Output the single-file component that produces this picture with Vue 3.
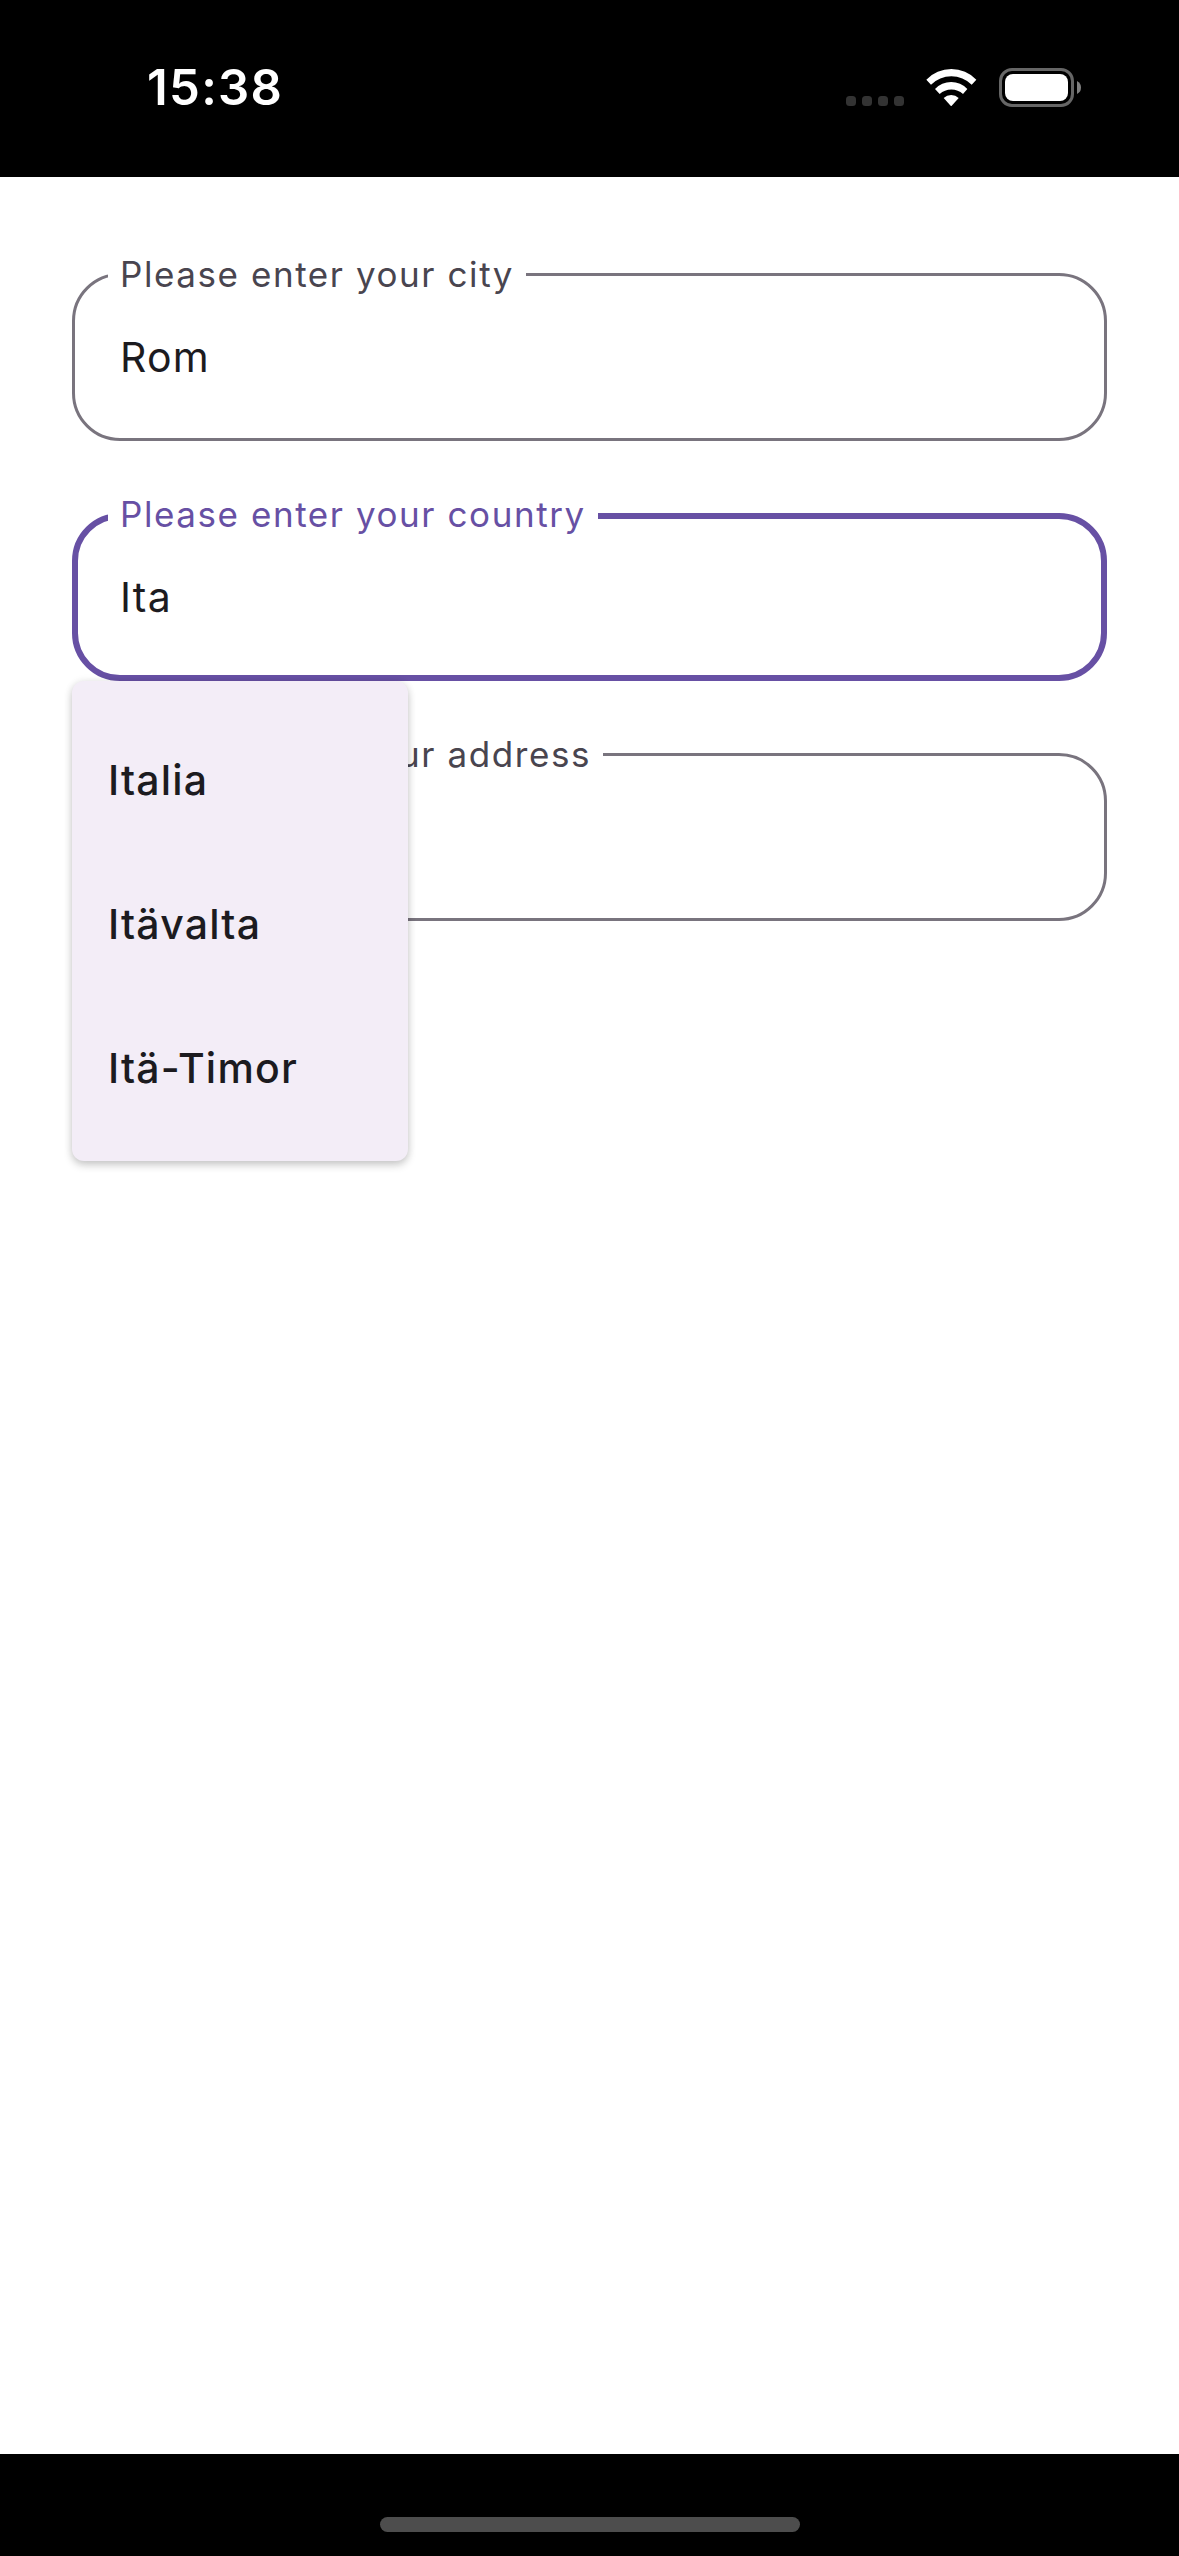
<script setup>
const fields = [
  { id: 'city', label: 'Please enter your city', value: 'Rom' },
  {
    id: 'country',
    label: 'Please enter your country',
    value: 'Ita',
    focused: true,
    options: ['Italia', 'Itävalta', 'Itä-Timor'],
  },
  { id: 'address', label: 'Please enter your address', value: '' },
]
</script>

<template>
  <div class="screen">
    <header class="status-bar">
      <span class="time">15:38</span>
      <div class="indicators">
        <div class="signal"><i v-for="n in 4" :key="n" class="dot"></i></div>
        <svg class="wifi" viewBox="319 86 152 113" aria-hidden="true">
          <path d="M320 118A104 104 0 0 1 470 118L456 133A87 87 0 0 0 334 133Z" />
          <path d="M346 146A66.5 66.5 0 0 1 443 146L430 161A51 51 0 0 0 360 161Z" />
          <path d="M372 173A32 32 0 0 1 417 173L394.500 198Z" />
        </svg>
        <div class="battery">
          <div class="battery-body"><div class="battery-level"></div></div>
          <svg class="battery-tip" viewBox="0 0 4 13" aria-hidden="true">
            <path d="M0 0Q4 2 4 6.500T0 13Z" />
          </svg>
        </div>
      </div>
    </header>

    <main class="form">
      <div v-for="field in fields" :key="field.id" class="field">
        <fieldset class="outline" :class="{ focused: field.focused }">
          <legend class="label">{{ field.label }}</legend>
          <div class="value">{{ field.value }}</div>
        </fieldset>
        <ul v-if="field.options" class="menu">
          <li v-for="option in field.options" :key="option" class="option">{{ option }}</li>
        </ul>
      </div>
    </main>

    <footer class="home-area"><div class="home-indicator"></div></footer>
  </div>
</template>

<style>
body {
  margin: 0;
  background: #fff;
}
</style>

<style scoped>
.screen {
  display: flex;
  flex-direction: column;
  width: 1179px;
  height: 2556px;
  overflow: hidden;
  background: #fff;
  font-family: Inter, 'Liberation Sans', sans-serif;
  color: #1c1b1f;
}

.status-bar {
  display: flex;
  justify-content: space-between;
  box-sizing: border-box;
  height: 177px;
  padding: 58px 98px 0 147px;
  background: #000;
  color: #fff;
}

.time {
  font-size: 49px;
  font-weight: 600;
  line-height: 60px;
  letter-spacing: 1.3px;
}

.indicators {
  display: flex;
  align-items: flex-start;
  padding-top: 10px;
}

.signal {
  display: flex;
  gap: 6px;
  margin: 28px 22.300px 0 0;
}

.dot {
  width: 10px;
  height: 10px;
  border-radius: 3.500px;
  background: #333;
}

.wifi {
  width: 50.700px;
  height: 37.700px;
  margin: 0.700px 22px 0 0;
  fill: #fff;
}

.battery {
  display: flex;
  align-items: center;
  gap: 3px;
}

.battery-body {
  box-sizing: border-box;
  width: 75px;
  height: 39px;
  padding: 3px;
  border: 3px solid #666;
  border-radius: 13px;
}

.battery-level {
  height: 100%;
  border-radius: 8px;
  background: #fff;
}

.battery-tip {
  width: 4px;
  height: 13px;
  fill: #808080;
}

.form {
  display: flex;
  flex: 1;
  flex-direction: column;
  gap: 54px;
  padding: 78px 72px 0;
}

.field {
  position: relative;
}

.outline {
  box-sizing: border-box;
  min-width: 0;
  height: 186px;
  margin: 0;
  padding: 39px 45px 0 33px;
  border: 3px solid #79747e;
  border-radius: 48px;
}

.label {
  padding: 0 12px;
  font-size: 35px;
  line-height: 39px;
  letter-spacing: 1.570px;
  white-space: nowrap;
  color: #49454f;
}

.value {
  padding-left: 12px;
  font-size: 41px;
  line-height: 48px;
  letter-spacing: 1.250px;
}

.outline.focused {
  padding: 36px 42px 0 30px;
  border: 6px solid #6750a4;
}

.focused .label {
  padding-bottom: 3px;
  color: #6750a4;
}

.menu {
  position: absolute;
  z-index: 1;
  top: 186px;
  left: 0;
  box-sizing: border-box;
  width: 336px;
  margin: 0;
  padding: 24px 0;
  border-radius: 12px;
  background: #f3edf7;
  box-shadow: 0 4px 9px rgba(0, 0, 0, 0.2), 0 0 9px rgba(0, 0, 0, 0.07);
  list-style: none;
}

.option {
  box-sizing: border-box;
  height: 144px;
  padding: 6px 36px 0;
  font-size: 41px;
  font-weight: 500;
  line-height: 138px;
  letter-spacing: 1.200px;
}

.home-area {
  display: flex;
  justify-content: center;
  box-sizing: border-box;
  height: 102px;
  padding: 63px 0 0 1px;
  background: #000;
}

.home-indicator {
  width: 420px;
  height: 15px;
  border-radius: 8px;
  background: #4d4d4d;
}
</style>
